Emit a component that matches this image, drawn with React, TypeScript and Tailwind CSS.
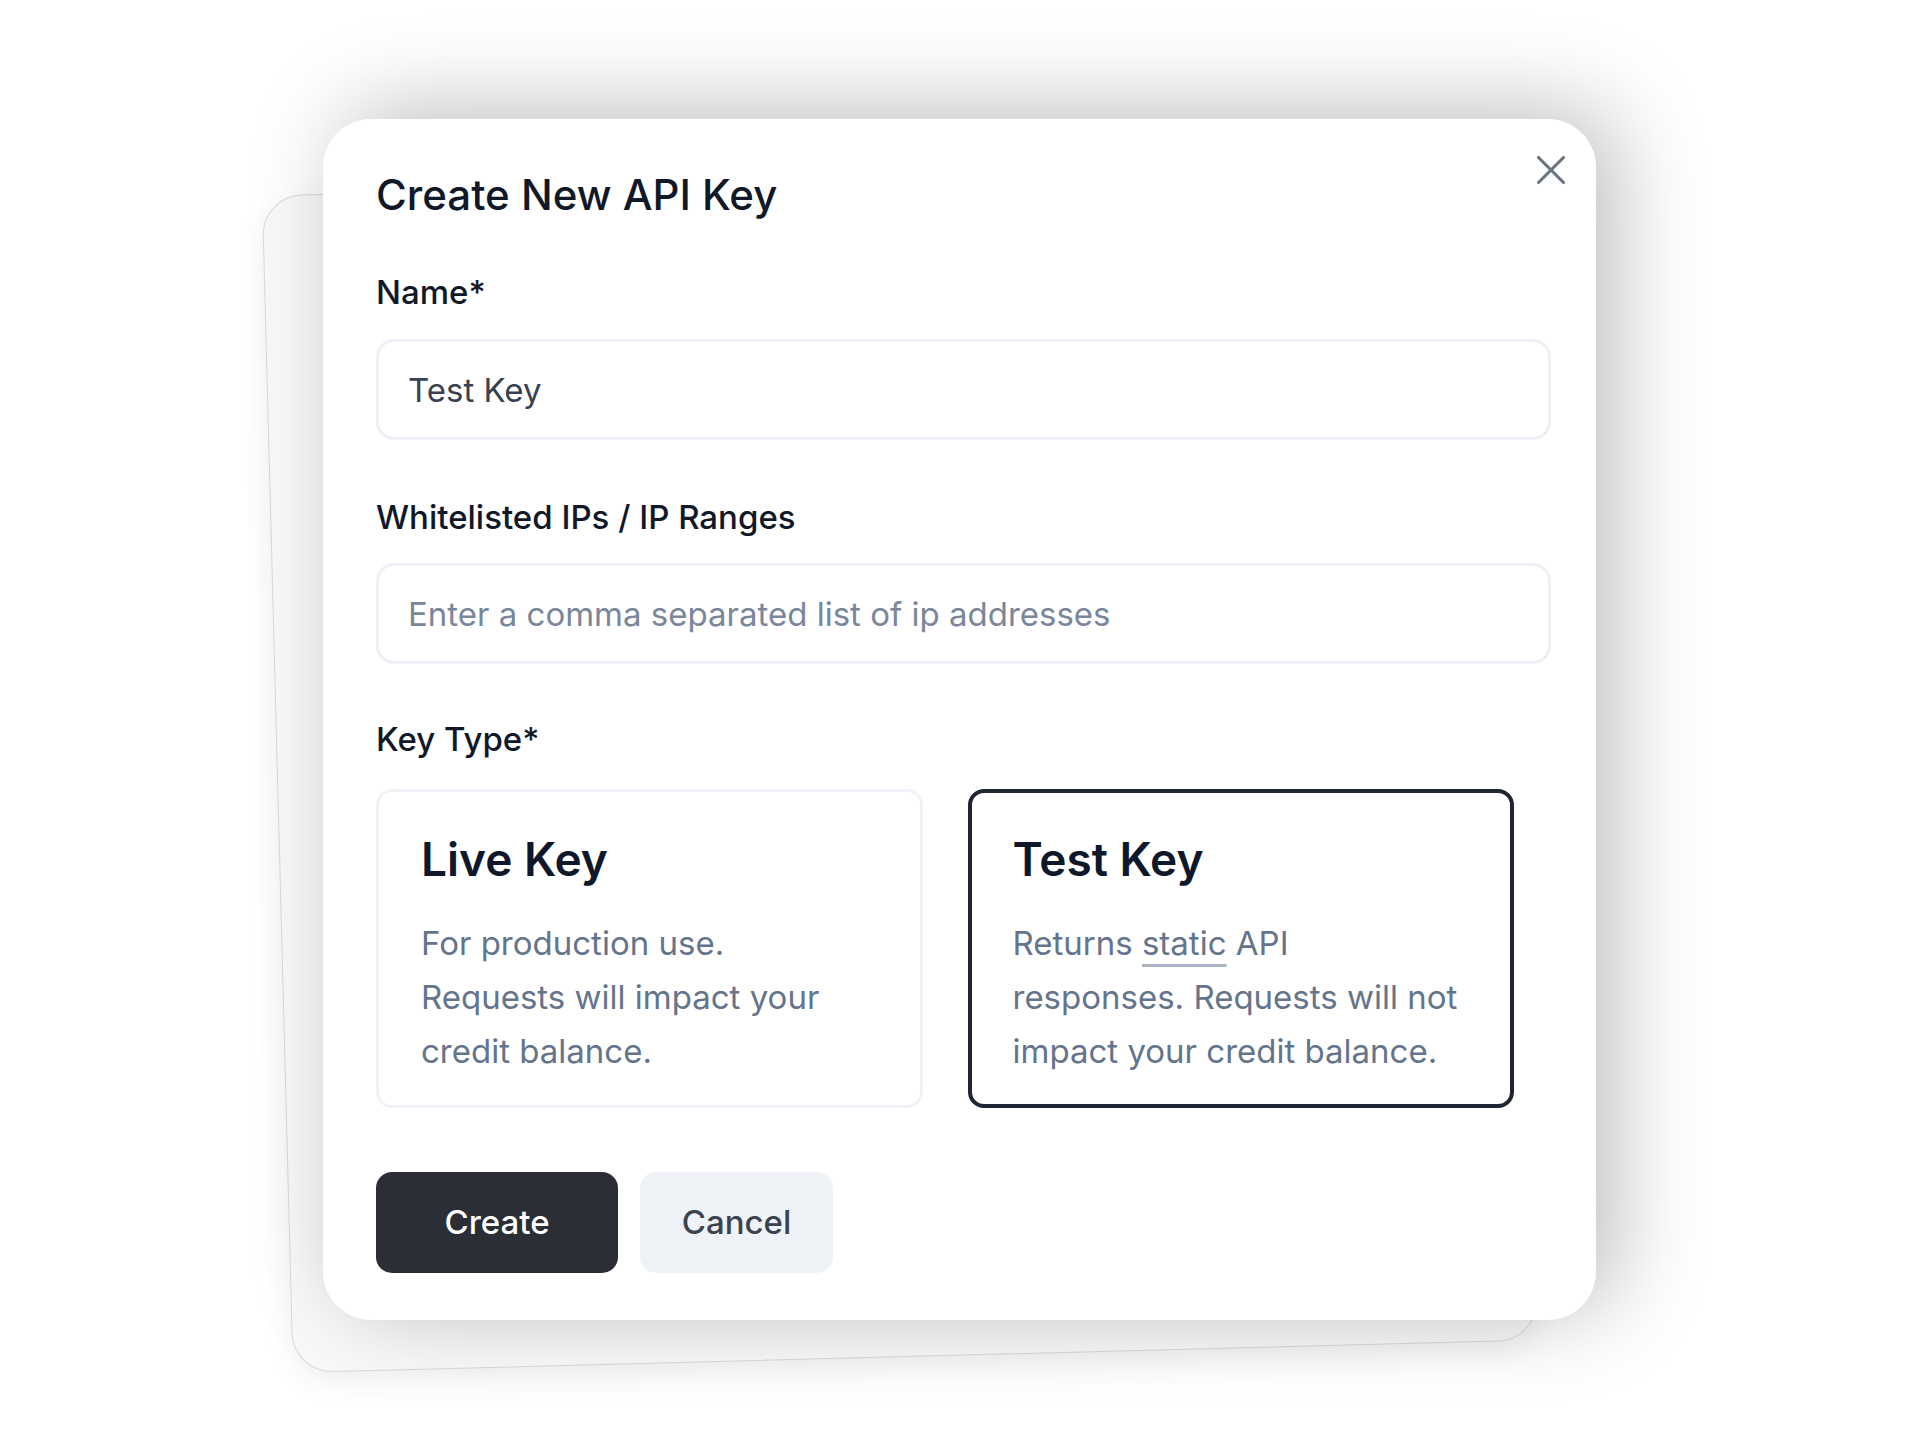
import { X } from "lucide-react";

const labelClass = "text-[33px] leading-[40px] font-medium text-[#111827]";
const inputClass =
  "block w-full h-[101px] rounded-[18px] border-[3px] border-[#edf1f6] bg-white pl-[29px] text-[33px] text-[#374151] outline-none placeholder:text-[#7a869a]";

export default function App() {
  return (
    <div className="min-h-screen w-full bg-white font-['Inter',sans-serif]">
      <div className="pl-[323px] pt-[119px] pb-[120px]">
        <div className="relative w-[1273px]">
          {/* Card stacked behind */}
          <div className="absolute left-[-46px] top-[60px] w-[1246px] h-[1178px] -rotate-[1.5deg] rounded-[40px] border border-[#d9d9d9] bg-[#f9f9f9] shadow-[0_10px_30px_rgba(0,0,0,0.06)]" />

          {/* Modal */}
          <div className="relative rounded-[48px] bg-white pl-[53px] pr-[45px] pt-[51px] pb-[47px] shadow-[20px_-10px_90px_rgba(0,0,0,0.26)]">
            <button className="absolute top-[26px] right-[20px] text-[#6b7280]" title="Close">
              <X size={50} strokeWidth={1.5} />
            </button>

            <h2 className="text-[42px] leading-[50px] font-medium text-[#111827]">Create New API Key</h2>

            <div className={`${labelClass} mt-[52px]`}>Name*</div>
            <input className={`${inputClass} mt-[27px]`} defaultValue="Test Key" readOnly />

            <div className={`${labelClass} mt-[57px]`}>Whitelisted IPs / IP Ranges</div>
            <input
              className={`${inputClass} mt-[26px]`}
              placeholder="Enter a comma separated list of ip addresses"
              readOnly
            />

            <div className={`${labelClass} mt-[55px]`}>Key Type*</div>

            <div className="mt-[30px] grid w-[1138px] grid-cols-2 gap-[45px]">
              {/* Live Key */}
              <div className="rounded-[16px] border-[3px] border-[#f0f2f7] bg-white px-[42px] pt-[39px] pb-[27px]">
                <h3 className="text-[46px] leading-[56px] font-semibold text-[#0f172a]">Live Key</h3>
                <p className="mt-[29px] whitespace-nowrap text-[33px] leading-[54px] text-[#64748b]">
                  For production use.
                  <br />
                  Requests will impact your
                  <br />
                  credit balance.
                </p>
              </div>

              {/* Test Key (selected) */}
              <div className="rounded-[16px] border-4 border-[#1f2532] bg-white px-[41px] pt-[38px] pb-[26px]">
                <h3 className="text-[46px] leading-[56px] font-semibold text-[#0f172a]">Test Key</h3>
                <p className="mt-[29px] whitespace-nowrap text-[33px] leading-[54px] text-[#64748b]">
                  Returns{" "}
                  <span className="underline decoration-[#a9b3c3] decoration-[3px] underline-offset-[9px]">static</span>{" "}
                  API
                  <br />
                  responses. Requests will not
                  <br />
                  impact your credit balance.
                </p>
              </div>
            </div>

            <div className="mt-[64px] flex gap-[22px]">
              <button className="h-[101px] w-[242px] rounded-[16px] bg-[#2b2e35] text-[33px] font-medium text-white">
                Create
              </button>
              <button className="h-[101px] w-[193px] rounded-[16px] bg-[#eff3f8] text-[33px] font-medium text-[#3b4250]">
                Cancel
              </button>
            </div>
          </div>
        </div>
      </div>
    </div>
  );
}
